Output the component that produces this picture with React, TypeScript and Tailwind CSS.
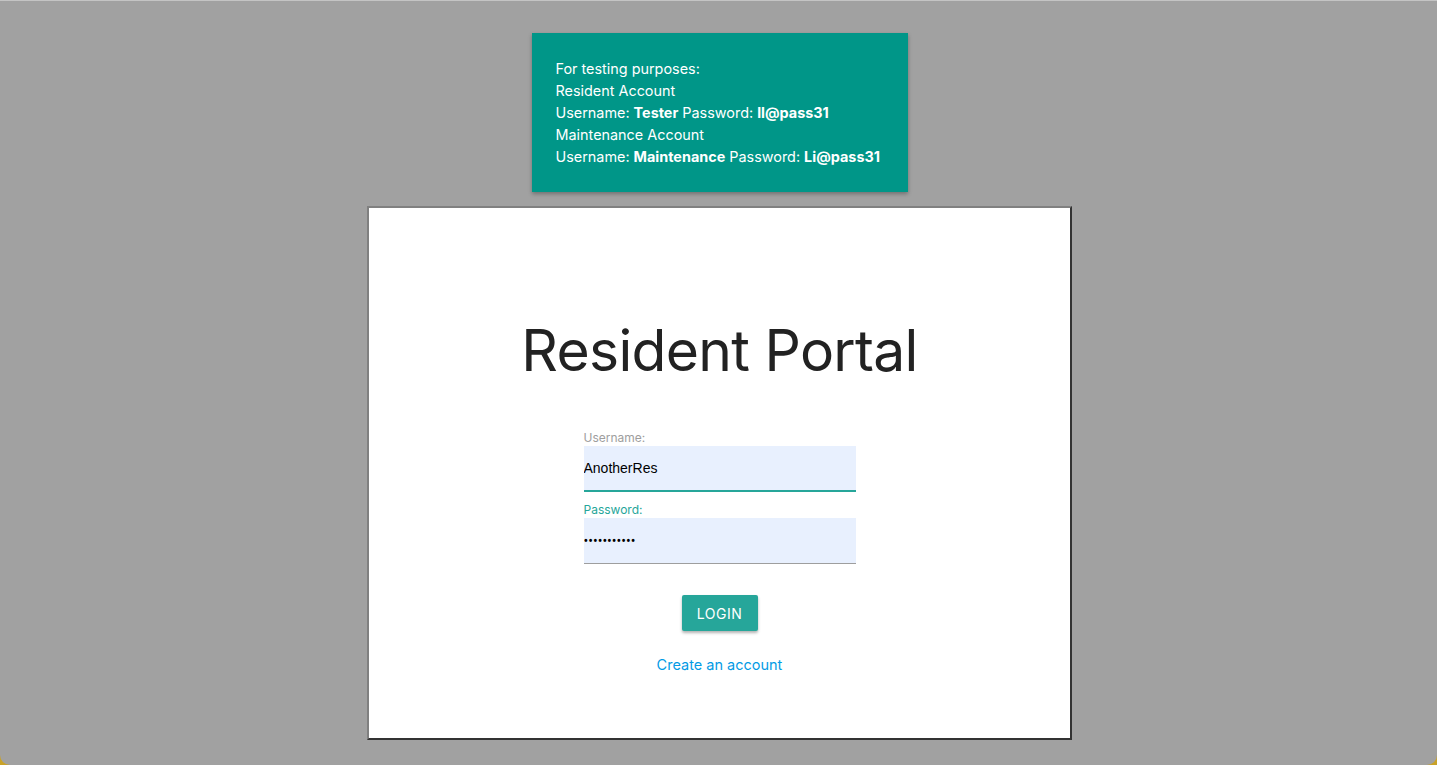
import React, { useState } from 'react';

export default function App() {
  const [username, setUsername] = useState('AnotherRes');
  const [password, setPassword] = useState('Li@pass3100');

  return (
    <div className="h-[765px] w-full bg-[#c9a227] overflow-hidden" style={{ fontFamily: 'Inter, Roboto, "Noto Sans", sans-serif' }}>
      <div className="h-full w-full bg-[#a1a1a1] rounded-b-[10px] border-t border-[#c4c4c4] pl-[2px] flex flex-col items-center">
        <div className="mt-[32px] w-[376px] bg-[#009688] text-white text-[14.4px] leading-[22px] whitespace-nowrap px-[24px] pt-[25px] pb-[24px] shadow-[0_2px_4px_rgba(0,0,0,0.3)]">
          <div>For testing purposes:</div>
          <div>Resident Account</div>
          <div>
            Username: <b className="font-bold">Tester</b> Password: <b className="font-bold">ll@pass31</b>
          </div>
          <div>Maintenance Account</div>
          <div>
            Username: <b className="font-bold">Maintenance</b> Password: <b className="font-bold">Li@pass31</b>
          </div>
        </div>

        <div className="mt-[14px] w-[705px] h-[534px] bg-white border-2 border-t-[#808080] border-l-[#808080] border-b-[#333333] border-r-[#333333] flex flex-col items-center">
          <h1 className="mt-[107px] text-[57px] leading-[72px] text-[#222222] font-normal tracking-[-0.7px]">
            Resident Portal
          </h1>

          <form className="mt-[43px] w-[272px] flex flex-col" onSubmit={(e) => e.preventDefault()}>
            <label className="text-[12px] leading-[16px] text-[#9e9e9e]">Username:</label>
            <input
              type="text"
              value={username}
              onChange={(e) => setUsername(e.target.value)}
              className="h-[46px] bg-[#e8f0fe] text-[14px] text-black border-b-2 border-[#26a69a] outline-none"
              style={{ fontFamily: '"Liberation Sans", Arial, sans-serif' }}
            />
            <label className="mt-[10px] text-[12px] leading-[16px] text-[#26a69a]">Password:</label>
            <input
              type="password"
              value={password}
              onChange={(e) => setPassword(e.target.value)}
              className="h-[46px] bg-[#e8f0fe] text-[14px] text-black border-b border-[#9e9e9e] outline-none"
              style={{ fontFamily: 'Roboto, sans-serif' }}
            />
            <div className="mt-[31px] flex justify-center">
              <button
                type="submit"
                className="w-[76px] h-[36px] bg-[#26a69a] text-white text-[14px] tracking-[0.5px] rounded-[2px] shadow-[0_2px_3px_rgba(0,0,0,0.3)]"
              >
                LOGIN
              </button>
            </div>
            <div className="mt-[24px] flex justify-center">
              <a href="#" className="text-[14.5px] leading-[20px] text-[#039be5]">
                Create an account
              </a>
            </div>
          </form>
        </div>
      </div>
    </div>
  );
}
